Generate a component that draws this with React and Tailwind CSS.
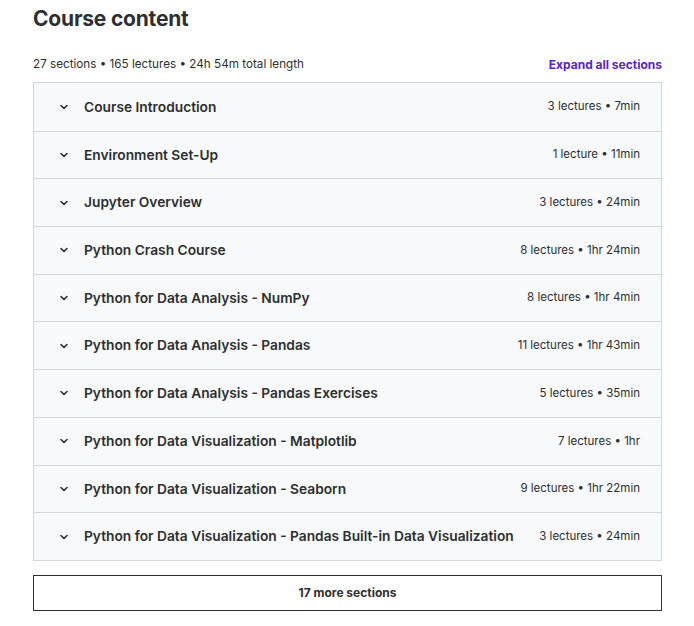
const sections = [
  { title: 'Course Introduction', meta: '3 lectures • 7min' },
  { title: 'Environment Set-Up', meta: '1 lecture • 11min' },
  { title: 'Jupyter Overview', meta: '3 lectures • 24min' },
  { title: 'Python Crash Course', meta: '8 lectures • 1hr 24min' },
  { title: 'Python for Data Analysis - NumPy', meta: '8 lectures • 1hr 4min' },
  { title: 'Python for Data Analysis - Pandas', meta: '11 lectures • 1hr 43min' },
  { title: 'Python for Data Analysis - Pandas Exercises', meta: '5 lectures • 35min' },
  { title: 'Python for Data Visualization - Matplotlib', meta: '7 lectures • 1hr' },
  { title: 'Python for Data Visualization - Seaborn', meta: '9 lectures • 1hr 22min' },
  { title: 'Python for Data Visualization - Pandas Built-in Data Visualization', meta: '3 lectures • 24min' },
]

function Chevron() {
  return (
    <svg width="12" height="12" viewBox="0 0 24 24" fill="none" stroke="#2d2f31" strokeWidth="3.2" strokeLinecap="round" strokeLinejoin="round">
      <path d="M6 9l6 6 6-6" />
    </svg>
  )
}

export default function App() {
  return (
    <div className="min-h-screen bg-white text-[#2d2f31] font-['Inter','Liberation_Sans',sans-serif]">
      <div className="w-[629px] ml-[33px] pt-[5px]">
        <h2 className="text-[21px] leading-[28px] font-bold tracking-[-0.2px]">Course content</h2>

        {/* Summary row */}
        <div className="mt-[21px] flex items-center justify-between h-[20px]">
          <span className="text-[11.7px] text-[#2d2f31] translate-y-[1px]">27 sections • 165 lectures • 24h 54m total length</span>
          <button className="text-[12px] font-bold text-[#5624d0] translate-y-[1px]">Expand all sections</button>
        </div>

        {/* Accordion */}
        <div className="mt-[8px] border border-[#d1d7dc]">
          {sections.map((s, i) => (
            <div
              key={s.title}
              className={`h-[47.7px] flex items-center justify-between bg-[#f7f9fa] pl-[24px] pr-[21px] ${i > 0 ? 'border-t border-[#d1d7dc]' : ''}`}
            >
              <div className="flex items-center gap-[14px]">
                <Chevron />
                <span className="text-[13.75px] font-semibold">{s.title}</span>
              </div>
              <span className="text-[11.5px] text-[#2d2f31]">{s.meta}</span>
            </div>
          ))}
        </div>

        <button className="mt-[14px] w-full h-[36px] border border-[#2d2f31] text-[12px] font-bold">
          17 more sections
        </button>
      </div>
    </div>
  )
}
